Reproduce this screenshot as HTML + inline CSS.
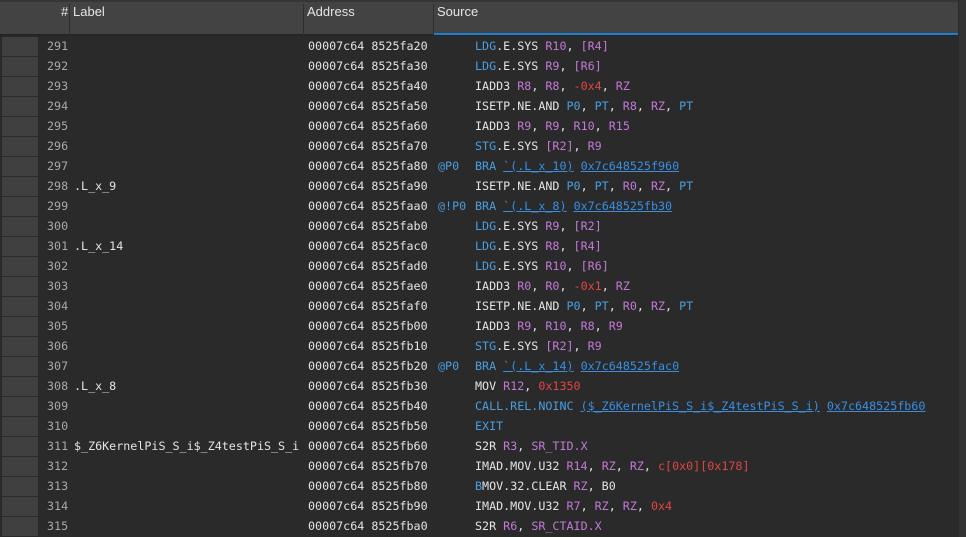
<!DOCTYPE html>
<html><head><meta charset="utf-8"><style>
*{margin:0;padding:0;box-sizing:border-box}
html,body{width:966px;height:537px;overflow:hidden}
body{background:#2a2a2a;position:relative;font-family:"Liberation Sans",sans-serif}
.hdr{position:absolute;left:0;top:0;width:958px;height:36px;background:#434343;border-top:2px solid #363636;border-bottom:2px solid #262626}
.hdr span{position:absolute;top:2px;color:#e6e6e6;font-size:13px}
.sep{position:absolute;top:2px;width:1px;height:32px;background:#2e2e2e}
.ul{position:absolute;left:434px;top:33px;width:524px;height:2px;background:#1a7fd4}
.sb{position:absolute;left:958px;top:0;width:8px;height:537px;background:#333;border-left:1px solid #2a2a2a}
.row{position:absolute;left:0;height:20px;width:958px;font-family:"DejaVu Sans Mono",monospace;font-size:11.7px;line-height:20px;color:#e4e4e4;white-space:pre}
.g{position:absolute;left:2px;top:1px;width:36px;height:19px;background:#404040}
.n{position:absolute;left:47px;color:#a8a8a8}
.lb{position:absolute;left:74px}
.ad{position:absolute;left:308px}
.pr{position:absolute;left:438px;color:#4a9ee0}
.op{position:absolute;left:475px}
.b{color:#4a9ee0}.p{color:#c27ad6}.r{color:#e04646}.l{color:#3a8ee0;text-decoration:underline}
</style></head><body>
<div class="hdr">
<span style="left:61px">#</span><span style="left:73px">Label</span><span style="left:307px">Address</span><span style="left:437px">Source</span>
<div class="sep" style="left:69px"></div><div class="sep" style="left:303px"></div><div class="sep" style="left:433px"></div>
</div>
<div class="ul"></div>
<div class="sb"></div>

<div class="row" style="top:36px"><div class="g"></div><span class="n">291</span><span class="ad">00007c64 8525fa20</span><span class="op"><span class="b">LDG</span>.E.SYS <span class="p">R10</span>, <span class="p">[R4]</span></span></div>
<div class="row" style="top:56px"><div class="g"></div><span class="n">292</span><span class="ad">00007c64 8525fa30</span><span class="op"><span class="b">LDG</span>.E.SYS <span class="p">R9</span>, <span class="p">[R6]</span></span></div>
<div class="row" style="top:76px"><div class="g"></div><span class="n">293</span><span class="ad">00007c64 8525fa40</span><span class="op">IADD3 <span class="p">R8</span>, <span class="p">R8</span>, <span class="r">-0x4</span>, <span class="p">RZ</span></span></div>
<div class="row" style="top:96px"><div class="g"></div><span class="n">294</span><span class="ad">00007c64 8525fa50</span><span class="op">ISETP.NE.AND <span class="b">P0</span>, <span class="b">PT</span>, <span class="p">R8</span>, <span class="p">RZ</span>, <span class="b">PT</span></span></div>
<div class="row" style="top:116px"><div class="g"></div><span class="n">295</span><span class="ad">00007c64 8525fa60</span><span class="op">IADD3 <span class="p">R9</span>, <span class="p">R9</span>, <span class="p">R10</span>, <span class="p">R15</span></span></div>
<div class="row" style="top:136px"><div class="g"></div><span class="n">296</span><span class="ad">00007c64 8525fa70</span><span class="op"><span class="b">STG</span>.E.SYS <span class="p">[R2]</span>, <span class="p">R9</span></span></div>
<div class="row" style="top:156px"><div class="g"></div><span class="n">297</span><span class="ad">00007c64 8525fa80</span><span class="pr">@P0</span><span class="op"><span class="b">BRA</span> <span class="l">`(.L_x_10)</span> <span class="l">0x7c648525f960</span></span></div>
<div class="row" style="top:176px"><div class="g"></div><span class="n">298</span><span class="lb">.L_x_9</span><span class="ad">00007c64 8525fa90</span><span class="op">ISETP.NE.AND <span class="b">P0</span>, <span class="b">PT</span>, <span class="p">R0</span>, <span class="p">RZ</span>, <span class="b">PT</span></span></div>
<div class="row" style="top:196px"><div class="g"></div><span class="n">299</span><span class="ad">00007c64 8525faa0</span><span class="pr">@!P0</span><span class="op"><span class="b">BRA</span> <span class="l">`(.L_x_8)</span> <span class="l">0x7c648525fb30</span></span></div>
<div class="row" style="top:216px"><div class="g"></div><span class="n">300</span><span class="ad">00007c64 8525fab0</span><span class="op"><span class="b">LDG</span>.E.SYS <span class="p">R9</span>, <span class="p">[R2]</span></span></div>
<div class="row" style="top:236px"><div class="g"></div><span class="n">301</span><span class="lb">.L_x_14</span><span class="ad">00007c64 8525fac0</span><span class="op"><span class="b">LDG</span>.E.SYS <span class="p">R8</span>, <span class="p">[R4]</span></span></div>
<div class="row" style="top:256px"><div class="g"></div><span class="n">302</span><span class="ad">00007c64 8525fad0</span><span class="op"><span class="b">LDG</span>.E.SYS <span class="p">R10</span>, <span class="p">[R6]</span></span></div>
<div class="row" style="top:276px"><div class="g"></div><span class="n">303</span><span class="ad">00007c64 8525fae0</span><span class="op">IADD3 <span class="p">R0</span>, <span class="p">R0</span>, <span class="r">-0x1</span>, <span class="p">RZ</span></span></div>
<div class="row" style="top:296px"><div class="g"></div><span class="n">304</span><span class="ad">00007c64 8525faf0</span><span class="op">ISETP.NE.AND <span class="b">P0</span>, <span class="b">PT</span>, <span class="p">R0</span>, <span class="p">RZ</span>, <span class="b">PT</span></span></div>
<div class="row" style="top:316px"><div class="g"></div><span class="n">305</span><span class="ad">00007c64 8525fb00</span><span class="op">IADD3 <span class="p">R9</span>, <span class="p">R10</span>, <span class="p">R8</span>, <span class="p">R9</span></span></div>
<div class="row" style="top:336px"><div class="g"></div><span class="n">306</span><span class="ad">00007c64 8525fb10</span><span class="op"><span class="b">STG</span>.E.SYS <span class="p">[R2]</span>, <span class="p">R9</span></span></div>
<div class="row" style="top:356px"><div class="g"></div><span class="n">307</span><span class="ad">00007c64 8525fb20</span><span class="pr">@P0</span><span class="op"><span class="b">BRA</span> <span class="l">`(.L_x_14)</span> <span class="l">0x7c648525fac0</span></span></div>
<div class="row" style="top:376px"><div class="g"></div><span class="n">308</span><span class="lb">.L_x_8</span><span class="ad">00007c64 8525fb30</span><span class="op">MOV <span class="p">R12</span>, <span class="r">0x1350</span></span></div>
<div class="row" style="top:396px"><div class="g"></div><span class="n">309</span><span class="ad">00007c64 8525fb40</span><span class="op"><span class="b">CALL.REL.NOINC</span> <span class="l">($_Z6KernelPiS_S_i$_Z4testPiS_S_i)</span> <span class="l">0x7c648525fb60</span></span></div>
<div class="row" style="top:416px"><div class="g"></div><span class="n">310</span><span class="ad">00007c64 8525fb50</span><span class="op"><span class="b">EXIT</span></span></div>
<div class="row" style="top:436px"><div class="g"></div><span class="n">311</span><span class="lb">$_Z6KernelPiS_S_i$_Z4testPiS_S_i</span><span class="ad">00007c64 8525fb60</span><span class="op">S2R <span class="p">R3</span>, <span class="p">SR_TID.X</span></span></div>
<div class="row" style="top:456px"><div class="g"></div><span class="n">312</span><span class="ad">00007c64 8525fb70</span><span class="op">IMAD.MOV.U32 <span class="p">R14</span>, <span class="p">RZ</span>, <span class="p">RZ</span>, <span class="r">c[0x0][0x178]</span></span></div>
<div class="row" style="top:476px"><div class="g"></div><span class="n">313</span><span class="ad">00007c64 8525fb80</span><span class="op"><span class="b">B</span>MOV.32.CLEAR <span class="p">RZ</span>, B0</span></div>
<div class="row" style="top:496px"><div class="g"></div><span class="n">314</span><span class="ad">00007c64 8525fb90</span><span class="op">IMAD.MOV.U32 <span class="p">R7</span>, <span class="p">RZ</span>, <span class="p">RZ</span>, <span class="r">0x4</span></span></div>
<div class="row" style="top:516px;height:21px"><div class="g"></div><span class="n">315</span><span class="ad">00007c64 8525fba0</span><span class="op">S2R <span class="p">R6</span>, <span class="p">SR_CTAID.X</span></span></div>
</body></html>
